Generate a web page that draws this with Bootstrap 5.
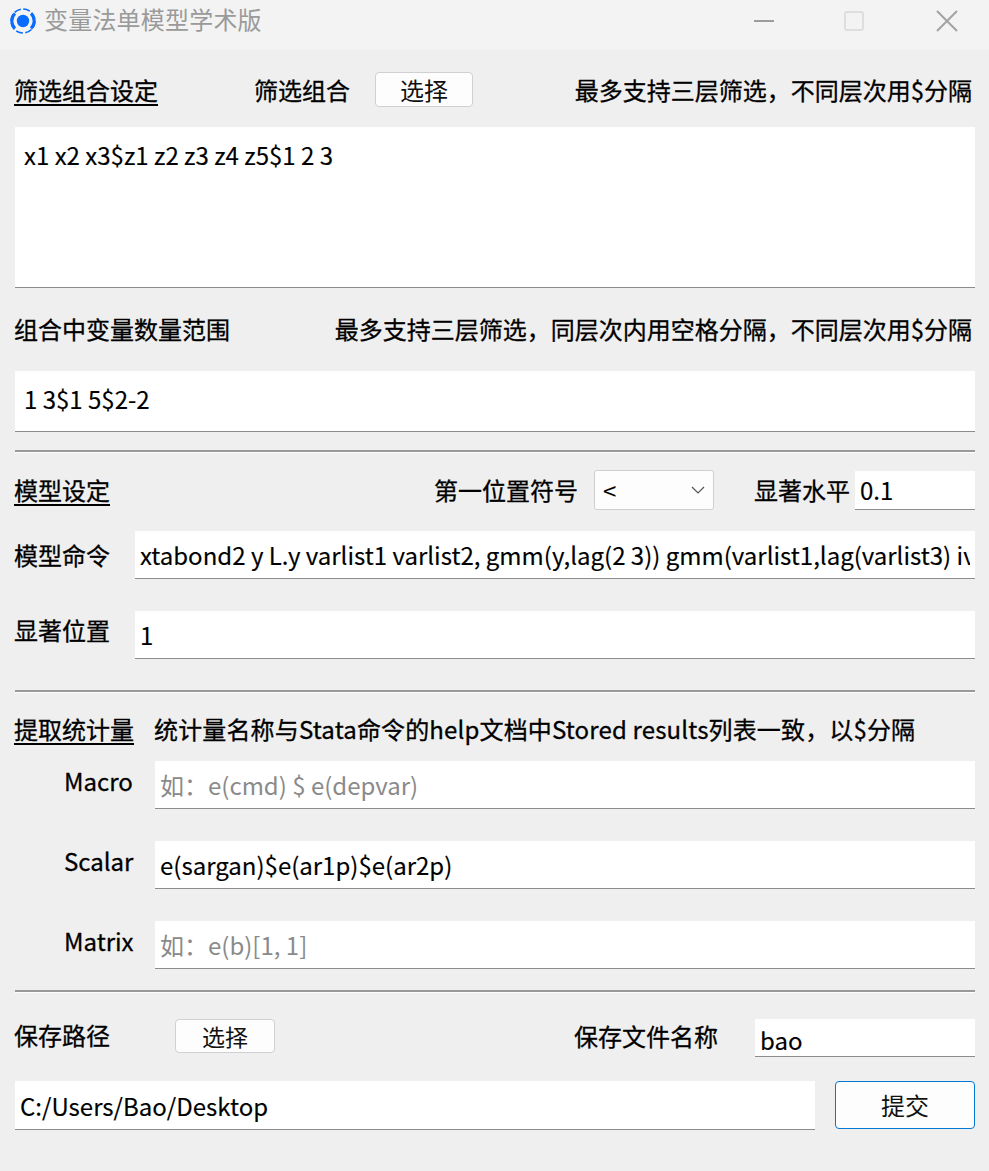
<!DOCTYPE html>
<html lang="zh-CN">
<head>
  <meta charset="UTF-8">
  <title>变量法单模型学术版</title>
  <meta name="viewport" content="width=device-width, initial-scale=1">
  <link href="https://cdn.jsdelivr.net/npm/bootstrap@5.3.3/dist/css/bootstrap.min.css" rel="stylesheet">
  <style>
    html, body { height: 100%; }
    body {
      background: #efefef;
      color: #000;
      font-family: "Noto Sans CJK SC", "Noto Sans", sans-serif;
      font-size: 24px;
      line-height: 34px;
      overflow: hidden;
    }
    .title-bar { height: 50px; background: #f3f3f3; padding: 0 30px 0 10px; }
    .title-text { color: #9a9a9a; margin-left: 8px; font-size: 24px; line-height: 34px; padding-bottom: 8px; letter-spacing: 0.2px; margin-top: -4px; }
    .title-icon { margin-bottom: 8px; flex: none; }
    .win-btn { width: 24px; height: 24px; display: block; flex: none; margin-bottom: 8px; }
    .win-max { margin-left: 65px; }
    .win-close { margin-left: 69px; }
    .form-body { padding: 0 14px 0 15px; }
    .line-row { display: flex; align-items: center; }
    .line-row > span { -webkit-text-stroke: 0.3px #000; }
    .u-label { text-decoration: underline; text-underline-offset: 4px; margin-left: -1px; }
    .right-note { margin-left: auto; margin-right: 3px; }
    .qt-input {
      display: block;
      background: #fff;
      border: 0;
      border-bottom: 1px solid #8c8c8c;
      border-radius: 0;
      padding: 0 5px;
      font: inherit;
      color: #000;
      width: 100%;
      outline: none;
      -webkit-text-stroke: 0.15px #000;
    }
    .qt-input::placeholder { color: #8a8a8a; opacity: 1; -webkit-text-stroke: 0; }
    .qt-area { height: 161px; margin-top: 20px; padding: 10px 9px; resize: none; line-height: 36px; overflow: hidden; }
    .qt-btn {
      background: #fdfdfd;
      border: 1px solid #d0d0d0;
      border-radius: 4px;
      color: #111;
      padding: 0;
      font-size: 24px;
      line-height: 1;
    }
    .qt-btn-sm { font-size: 23px; }
    .qt-btn-main { border-color: #0078d4; }
    .qt-select {
      width: 120px;
      height: 40px;
      margin-left: 16px;
      background: #fdfdfd;
      border: 1px solid #cfcfcf;
      border-radius: 3px;
      padding: 0 8px;
      display: flex;
      align-items: center;
      justify-content: space-between;
    }
    .rule { height: 3px; background: #999; border-bottom: 1px solid #fff; }
    .side-label { width: 141px; margin-left: -1px; padding-left: 50px; padding-bottom: 8px; flex: none; }
    .form-row-a { margin-top: 22px; height: 35px; }
    .label-b { margin-left: 96px; }
    .btn-pick { width: 98px; height: 35px; margin-left: 25px; }
    .form-row-b { margin-top: 26px; height: 34px; }
    .form-row-b > span { padding-bottom: 4px; }
    .first-b { margin-left: -1px; }
    .input-tall { height: 61px; margin-top: 23px; padding: 0 9px 6px; }
    .rule-a { margin-top: 18px; }
    .form-row-c { margin-top: 17px; height: 40px; }
    .label-sig { margin-left: 40px; }
    .input-sig { width: 120px; height: 39px; margin-left: 5px; }
    .input-48 { height: 48px; flex: 1; min-width: 0; }
    .cmd-label { width: 121px; flex: none; margin-left: -1px; }
    .form-row-d { margin-top: 21px; height: 48px; }
    .form-row-e { margin-top: 32px; height: 48px; }
    .form-row-e .cmd-label { padding-bottom: 10px; }
    .rule-b { margin-top: 31px; }
    .form-row-f { margin-top: 21px; height: 34px; }
    .form-row-f > span { padding-bottom: 4px; }
    .ms-label { margin-left: 20px; letter-spacing: 0.15px; }
    .form-row-g { margin-top: 13px; height: 48px; }
    .form-row-h { margin-top: 32px; height: 48px; }
    .rule-c { margin-top: 21px; }
    .form-row-i { margin-top: 26px; height: 38px; align-items: flex-start; }
    .path-label { width: 161px; flex: none; margin-left: -1px; margin-top: -1px; }
    .btn-path { width: 100px; height: 34px; }
    .name-label { margin-left: auto; }
    .input-name { width: 220px; height: 38px; margin-left: 37px; padding-top: 4px; }
    .form-row-j { margin-top: 24px; height: 49px; align-items: flex-start; }
    .input-path { width: 800px; height: 49px; flex: none; }
    .btn-submit { width: 140px; height: 48px; margin-left: 20px; }
  </style>
</head>
<body>
  <div class="title-bar d-flex align-items-center">
    <svg class="title-icon" width="26" height="26" viewBox="0 0 26 26" fill="none">
      <circle cx="13" cy="13" r="12" stroke="#0a6cff" stroke-width="1.6" stroke-dasharray="7 2.4"/>
      <path d="M5 5.5A10.5 10.5 0 0 0 5 20.5M21 5.5A10.5 10.5 0 0 1 21 20.5" stroke="#0a6cff" stroke-width="3"/>
      <circle cx="13" cy="13" r="6.2" fill="#0a6cff"/>
    </svg>
    <span class="title-text">变量法单模型学术版</span>
    <svg class="win-btn ms-auto" viewBox="0 0 24 24"><path d="M1 12H21" stroke="#9c9c9c" stroke-width="2"/></svg>
    <svg class="win-btn win-max" viewBox="0 0 24 24" fill="none"><rect x="3" y="3" width="18" height="18" rx="2" stroke="#dedede" stroke-width="2"/></svg>
    <svg class="win-btn win-close" viewBox="0 0 24 24"><path d="M2 2L22 22M22 2L2 22" stroke="#a2a2a2" stroke-width="2"/></svg>
  </div>

  <div class="form-body">
    <div class="line-row form-row-a">
      <span class="u-label">筛选组合设定</span>
      <span class="label-b">筛选组合</span>
      <button type="button" class="qt-btn btn-pick">选择</button>
      <span class="right-note">最多支持三层筛选，不同层次用$分隔</span>
    </div>
    <textarea class="qt-input qt-area">x1 x2 x3$z1 z2 z3 z4 z5$1 2 3</textarea>

    <div class="line-row form-row-b">
      <span class="first-b">组合中变量数量范围</span>
      <span class="right-note">最多支持三层筛选，同层次内用空格分隔，不同层次用$分隔</span>
    </div>
    <input class="qt-input input-tall" value="1 3$1 5$2-2">
    <div class="rule rule-a"></div>

    <div class="line-row form-row-c">
      <span class="u-label">模型设定</span>
      <span class="ms-auto">第一位置符号</span>
      <div class="qt-select">
        <span>&lt;</span>
        <svg width="14" height="8" viewBox="0 0 14 8" fill="none"><path d="M1 1L7 7L13 1" stroke="#555" stroke-width="1.2"/></svg>
      </div>
      <span class="label-sig">显著水平</span>
      <input class="qt-input input-sig" value="0.1">
    </div>

    <div class="line-row form-row-d">
      <span class="cmd-label">模型命令</span>
      <input class="qt-input input-48" value="xtabond2 y L.y varlist1 varlist2, gmm(y,lag(2 3)) gmm(varlist1,lag(varlist3) iv(varlist2) twostep robust">
    </div>
    <div class="line-row form-row-e">
      <span class="cmd-label">显著位置</span>
      <input class="qt-input input-48" value="1">
    </div>
    <div class="rule rule-b"></div>

    <div class="line-row form-row-f">
      <span class="u-label">提取统计量</span>
      <span class="ms-label">统计量名称与Stata命令的help文档中Stored results列表一致，以$分隔</span>
    </div>
    <div class="line-row form-row-g">
      <span class="side-label">Macro</span>
      <input class="qt-input input-48" placeholder="如：e(cmd) $ e(depvar)">
    </div>
    <div class="line-row form-row-h">
      <span class="side-label">Scalar</span>
      <input class="qt-input input-48" value="e(sargan)$e(ar1p)$e(ar2p)">
    </div>
    <div class="line-row form-row-h">
      <span class="side-label">Matrix</span>
      <input class="qt-input input-48" placeholder="如：e(b)[1, 1]">
    </div>
    <div class="rule rule-c"></div>

    <div class="line-row form-row-i">
      <span class="path-label">保存路径</span>
      <button type="button" class="qt-btn qt-btn-sm btn-path">选择</button>
      <span class="name-label">保存文件名称</span>
      <input class="qt-input input-name" value="bao">
    </div>
    <div class="line-row form-row-j">
      <input class="qt-input input-path" value="C:/Users/Bao/Desktop">
      <button type="button" class="qt-btn qt-btn-main btn-submit">提交</button>
    </div>
  </div>
</body>
</html>
